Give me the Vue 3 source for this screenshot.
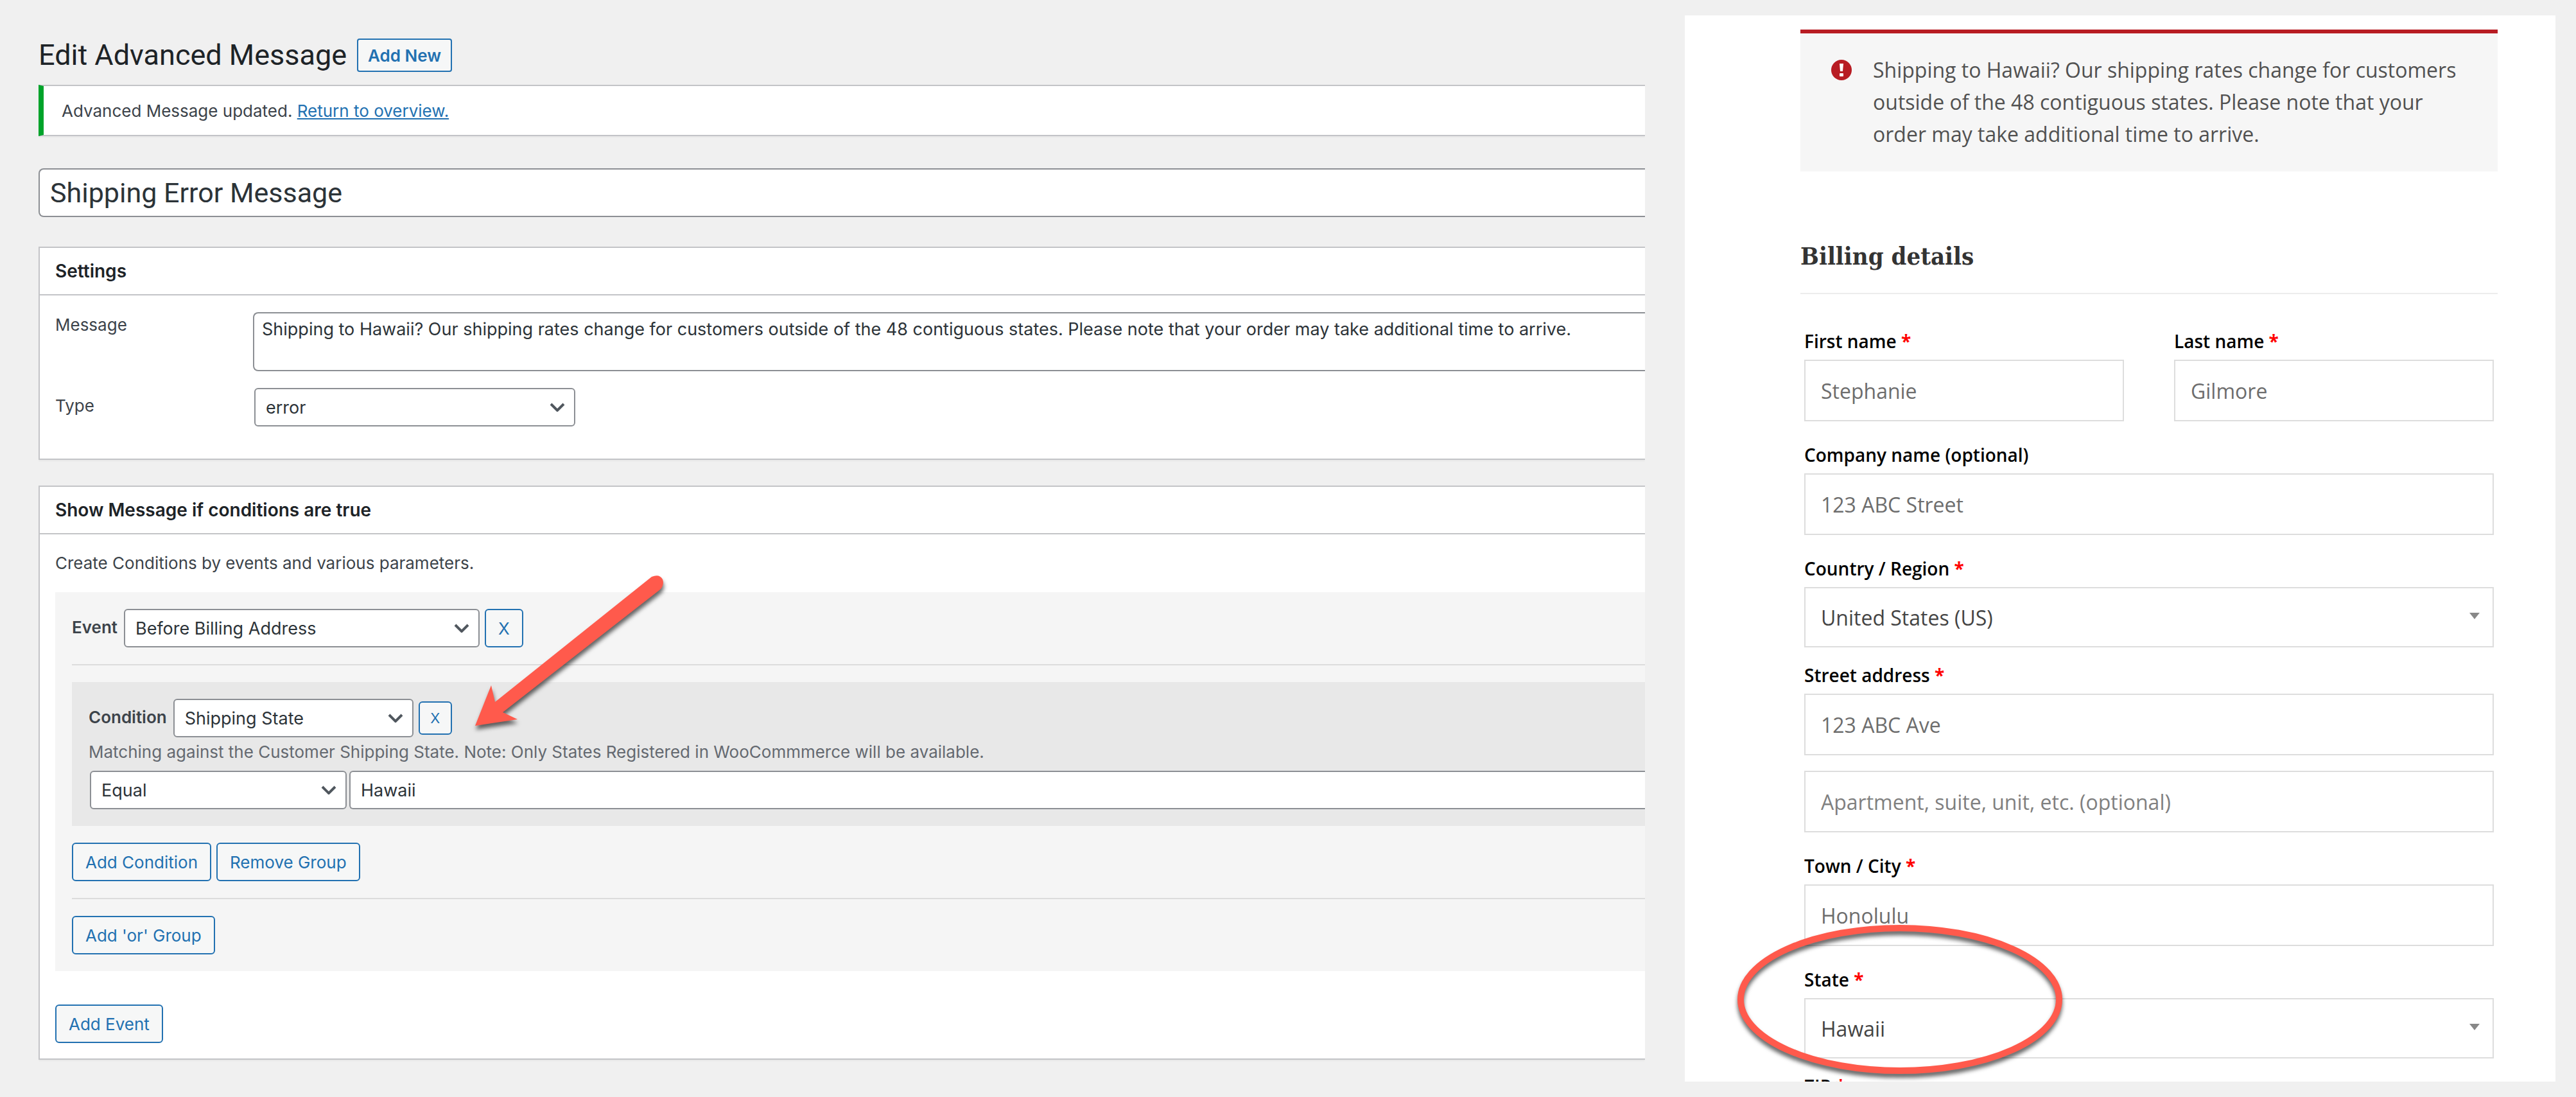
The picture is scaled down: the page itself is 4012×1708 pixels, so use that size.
<template>
    <div class="page">
        <main class="admin">
            <header class="admin-head">
                <h1>Edit Advanced Message</h1>
                <button type="button" class="btn btn-add-new">Add New</button>
            </header>

            <div class="notice">
                <p>Advanced Message updated. <a href="#">Return to overview.</a></p>
            </div>

            <input v-model="title" class="title-input" type="text" aria-label="Title" />

            <section class="box">
                <h2 class="box-title">Settings</h2>
                <div class="settings">
                    <label for="message">Message</label>
                    <textarea id="message" v-model="message" class="control message-input"></textarea>
                    <label for="type">Type</label>
                    <div class="select-wrap select-type">
                        <select id="type" class="control">
                            <option>error</option>
                        </select>
                        <svg class="chevron" viewBox="0 0 24 14"><path d="M2 2l10 10L22 2" /></svg>
                    </div>
                </div>
            </section>

            <section class="box">
                <h2 class="box-title">Show Message if conditions are true</h2>
                <div class="conditions">
                    <p class="intro">Create Conditions by events and various parameters.</p>

                    <div class="event">
                        <div class="row">
                            <label class="row-label" for="event">Event</label>
                            <div class="select-wrap select-event">
                                <select id="event" class="control">
                                    <option>Before Billing Address</option>
                                </select>
                                <svg class="chevron" viewBox="0 0 24 14"><path d="M2 2l10 10L22 2" /></svg>
                            </div>
                            <button type="button" class="btn btn-x">X</button>
                        </div>
                        <hr />
                        <div class="condition">
                            <div class="row">
                                <label class="row-label" for="condition">Condition</label>
                                <div class="select-wrap select-condition">
                                    <select id="condition" class="control">
                                        <option>Shipping State</option>
                                    </select>
                                    <svg class="chevron" viewBox="0 0 24 14"><path d="M2 2l10 10L22 2" /></svg>
                                </div>
                                <button type="button" class="btn btn-x btn-small">X</button>
                            </div>
                            <p class="description">
                                Matching against the Customer Shipping State. Note: Only States Registered in WooCommmerce will be available.
                            </p>
                            <div class="row compare">
                                <div class="select-wrap select-operator">
                                    <select class="control" aria-label="Operator">
                                        <option>Equal</option>
                                    </select>
                                    <svg class="chevron" viewBox="0 0 24 14"><path d="M2 2l10 10L22 2" /></svg>
                                </div>
                                <input v-model="stateValue" class="control value-input" type="text" aria-label="Value" />
                            </div>
                            <svg class="arrow" viewBox="0 0 320 260">
                                <path d="M10 240L35 177L41 203L285 8Q297 3 302 12Q305 21 298 28L53 219L76 230Z" />
                            </svg>
                        </div>
                        <div class="row">
                            <button type="button" class="btn">Add Condition</button>
                            <button type="button" class="btn">Remove Group</button>
                        </div>
                        <hr />
                        <div class="row">
                            <button type="button" class="btn">Add 'or' Group</button>
                        </div>
                    </div>

                    <button type="button" class="btn">Add Event</button>
                </div>
            </section>
        </main>

        <aside class="checkout">
            <div class="error" role="alert">
                <svg class="error-icon" viewBox="0 0 32 32">
                    <circle cx="16" cy="16" r="16" />
                    <path d="M13 6h6l-1 12h-4z" />
                    <rect x="13" y="21" width="6" height="5" rx="1" />
                </svg>
                <p>{{ message }}</p>
            </div>

            <h3 class="billing-title">Billing details</h3>

            <form class="billing">
                <div
                    v-for="field in fields"
                    :key="field.id"
                    class="field"
                    :class="{ half: field.half, tight: field.select || field.id === 'street' }"
                >
                    <label v-if="field.label" :for="field.id">
                        {{ field.label }} <span v-if="field.required" class="required">*</span>
                    </label>
                    <div v-if="field.select" class="picker">
                        <select :id="field.id">
                            <option>{{ field.value }}</option>
                        </select>
                        <svg class="triangle" viewBox="0 0 16 10"><path d="M0 0h16L8 10z" /></svg>
                    </div>
                    <input v-else :id="field.id" type="text" :placeholder="field.value" :aria-label="field.label ? null : field.value" :class="{ light: !field.label }" />
                    <svg v-if="field.id === 'state'" class="ring" viewBox="0 0 520 250">
                        <ellipse cx="260" cy="122" rx="248" ry="111" />
                    </svg>
                </div>
            </form>
        </aside>
    </div>
</template>

<script setup>
import { ref } from 'vue';

const title = ref('Shipping Error Message');
const message = ref('Shipping to Hawaii? Our shipping rates change for customers outside of the 48 contiguous states. Please note that your order may take additional time to arrive.');
const stateValue = ref('Hawaii');

const fields = ref([
    { id: 'first-name', label: 'First name', value: 'Stephanie', required: true, half: true },
    { id: 'last-name', label: 'Last name', value: 'Gilmore', required: true, half: true },
    { id: 'company', label: 'Company name (optional)', value: '123 ABC Street' },
    { id: 'country', label: 'Country / Region', value: 'United States (US)', required: true, select: true },
    { id: 'street', label: 'Street address', value: '123 ABC Ave', required: true },
    { id: 'street-2', value: 'Apartment, suite, unit, etc. (optional)' },
    { id: 'city', label: 'Town / City', value: 'Honolulu', required: true },
    { id: 'state', label: 'State', value: 'Hawaii', required: true, select: true },
    { id: 'zip', label: 'ZIP', value: '', required: true }
]);
</script>

<style>
body {
    background: #f0f0f0;
}

* {
    box-sizing: border-box;
}
</style>

<style scoped>
.page {
    display: grid;
    grid-template-columns: minmax(0, 2502fr) minmax(0, 1356fr);
    column-gap: 62px;
    height: 100vh;
    padding: 24px 32px 24px 60px;
}

h1,
h2,
h3,
p {
    margin: 0;
}

input,
select,
textarea,
button {
    font-family: inherit;
    margin: 0;
}

/* Admin */
.admin {
    overflow: hidden;
    padding-top: 36px;
    font-family: Inter, "Liberation Sans", sans-serif;
    font-size: 26px;
    color: #3c434a;
}

.admin-head {
    display: flex;
    align-items: center;
    gap: 16px;
    height: 52px;
    margin-bottom: 20px;
}

h1 {
    font-family: Roboto, "Liberation Sans", sans-serif;
    font-size: 45px;
    font-weight: 400;
    line-height: 52px;
    color: #1d2327;
}

.btn {
    height: 60px;
    padding: 0 19px;
    border: 2px solid #2271b1;
    border-radius: 6px;
    background: #f6f7f7;
    color: #2271b1;
    font-size: 26px;
    cursor: pointer;
}

.btn-add-new {
    height: 52px;
    padding: 0 15px;
    border-radius: 4px;
    font-weight: 600;
}

.notice {
    display: flex;
    align-items: center;
    height: 80px;
    margin-bottom: 50px;
    padding-left: 28px;
    border: 2px solid #c3c4c7;
    border-left: 8px solid #00a32a;
    border-right: 0;
    background: #fff;
    box-shadow: 0 2px 2px rgba(0, 0, 0, 0.04);
}

.notice a {
    color: #2271b1;
}

.title-input {
    display: block;
    width: 100%;
    height: 76px;
    margin-bottom: 46px;
    padding: 0 16px;
    border: 2px solid #8c8f94;
    border-right: 0;
    border-radius: 8px 0 0 8px;
    background: #fff;
    color: #2c3338;
    font-family: Roboto, "Liberation Sans", sans-serif;
    font-size: 43px;
}

.box {
    margin-bottom: 40px;
    border: 2px solid #c3c4c7;
    border-right: 0;
    background: #fff;
    box-shadow: 0 2px 2px rgba(0, 0, 0, 0.04);
}

.box-title {
    padding: 0 24px;
    border-bottom: 2px solid #c3c4c7;
    font-size: 28px;
    font-weight: 600;
    line-height: 72px;
    color: #1d2327;
}

.settings {
    display: grid;
    grid-template-columns: 284px minmax(0, 1fr);
    gap: 26px;
    column-gap: 24px;
    padding: 26px 0 50px 24px;
}

.settings label {
    line-height: 40px;
}

.settings label[for="type"] {
    line-height: 56px;
}

.control {
    display: block;
    width: 100%;
    height: 60px;
    padding: 0 16px;
    border: 2px solid #8c8f94;
    border-radius: 6px;
    background: #fff;
    color: #2c3338;
    font-size: 27px;
    appearance: none;
}

.message-input {
    height: 92px;
    padding: 6px 12px;
    border-right: 0;
    border-radius: 8px 0 0 8px;
    line-height: 38px;
    resize: none;
    overflow: hidden;
}

.select-wrap {
    position: relative;
    flex: none;
    margin-left: 2px;
}

.select-type {
    width: 500px;
}

.select-event {
    width: 554px;
}

.select-condition {
    width: 374px;
}

.select-operator {
    width: 400px;
}

.chevron {
    position: absolute;
    top: 23px;
    right: 16px;
    width: 24px;
    height: 14px;
    fill: none;
    stroke: #50575e;
    stroke-width: 4;
    pointer-events: none;
}

.conditions {
    padding: 26px 0 24px 24px;
}

.intro {
    margin-bottom: 26px;
    line-height: 38px;
}

.event {
    margin-bottom: 52px;
    padding: 26px 0 26px 26px;
    background: #f5f5f5;
}

.row {
    display: flex;
    align-items: center;
    gap: 8px;
}

.row-label {
    padding-bottom: 4px;
    font-weight: 600;
}

.btn-x {
    width: 60px;
    padding: 0;
}

.btn-small {
    width: 52px;
    height: 52px;
    font-size: 22px;
}

hr {
    height: 2px;
    margin: 26px 0;
    border: 0;
    background: #dcdcdc;
}

.condition {
    position: relative;
    margin-bottom: 26px;
    padding: 26px 0 26px 26px;
    background: #e8e8e8;
}

.description {
    margin-bottom: 6px;
    line-height: 46px;
    color: #646970;
}

.compare {
    gap: 4px;
}

.value-input {
    flex: 1;
    border-right: 0;
    border-radius: 6px 0 0 6px;
}

.arrow {
    position: absolute;
    top: -172px;
    left: 618px;
    width: 320px;
    height: 260px;
    fill: #ff5a4c;
    filter: drop-shadow(1px 6px 3px rgba(0, 0, 0, 0.6));
    overflow: visible;
    pointer-events: none;
}

/* Checkout */
.checkout {
    overflow: hidden;
    padding: 22px 90px 0 180px;
    background: #fff;
    font-family: "Open Sans", "Noto Sans", sans-serif;
}

.error {
    display: flex;
    gap: 33px;
    padding: 32px 48px 33px;
    border-top: 6px solid #b81c23;
    background: #f6f6f6;
    color: #515151;
    font-size: 32px;
    line-height: 50px;
}

.error-icon {
    flex: none;
    width: 32px;
    height: 32px;
    margin-top: 9px;
    fill: #b81c23;
}

.error-icon path,
.error-icon rect {
    fill: #fff;
}

.billing-title {
    margin-top: 104px;
    padding-bottom: 29px;
    border-bottom: 2px solid #ededed;
    color: #333;
    font-family: "DejaVu Serif Condensed", "DejaVu Serif", serif;
    font-size: 38px;
    line-height: 56px;
}

.billing {
    display: grid;
    grid-template-columns: repeat(2, minmax(0, 1fr));
    column-gap: 78px;
    padding: 54px 6px 0;
}

.field {
    position: relative;
    grid-column: span 2;
    margin-bottom: 33px;
}

.field.half {
    grid-column: span 1;
}

.field.tight {
    margin-bottom: 24px;
}

.field label {
    display: block;
    margin-bottom: 10px;
    color: #000;
    font-size: 28px;
    font-weight: 600;
    line-height: 38px;
}

.required {
    color: #f00;
    font-weight: 700;
}

.field input,
.field select {
    display: block;
    width: 100%;
    height: 96px;
    padding: 0 24px;
    border: 2px solid #ddd;
    border-radius: 0;
    background: #fff;
    color: #444;
    font-size: 32px;
    appearance: none;
}

.field select {
    height: 94px;
}

.field input::placeholder {
    color: #6d6d6d;
    opacity: 1;
}

.field input.light::placeholder {
    color: #808080;
}

.picker {
    position: relative;
}

.triangle {
    position: absolute;
    top: 40px;
    right: 22px;
    width: 16px;
    height: 10px;
    fill: #888;
    pointer-events: none;
}

.ring {
    position: absolute;
    top: -72px;
    left: -111px;
    width: 520px;
    height: 250px;
    fill: none;
    stroke: #ff5a4c;
    stroke-width: 10;
    filter: drop-shadow(0 6px 3px rgba(0, 0, 0, 0.6));
    pointer-events: none;
}
</style>
